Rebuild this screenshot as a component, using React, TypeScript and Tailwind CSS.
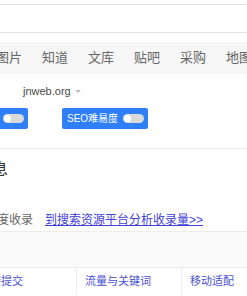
const navItems = ["图片", "知道", "文库", "贴吧", "采购", "地图"];

const Toggle = () => (
  <span className="flex h-[9px] w-[21px] items-center rounded-full bg-[#dadada] px-[1px]">
    <span className="h-[7px] w-[7px] rounded-full bg-white" />
  </span>
);

const SwitchButton = ({ label }: { label: string }) => (
  <div className="flex h-[21px] shrink-0 items-center gap-[5px] rounded-[2px] bg-[#2f7ff8] pl-[5px] pr-[4px] text-[10px] text-white">
    <span className="whitespace-nowrap">{label}</span>
    <Toggle />
  </div>
);

export default function App() {
  return (
    <div className="h-[296px] w-[247px] overflow-hidden bg-white font-['Liberation_Sans','Noto_Sans_CJK_SC',sans-serif]">
      <div className="h-[4px]" />
      <div className="h-[29px] border-y border-[#e3e3e3]" />
      <div className="h-[9px]" />

      <nav className="flex h-[32px] items-center gap-[20px] whitespace-nowrap bg-[#f6f6f6] pl-0 text-[13px] text-[#666]">
        <div className="-ml-[4px] flex gap-[20px]">
          {navItems.map((item) => (
            <span key={item}>{item}</span>
          ))}
        </div>
      </nav>

      <div className="border-b border-[#ececec]">
        <div className="flex h-[34px] items-center pl-[23px] text-[11px] text-[#4a4a4a]">
          <span>jnweb.org</span>
          <span className="ml-[4px] h-0 w-0 border-x-[3px] border-t-[3px] border-x-transparent border-t-[#bbb]" />
        </div>
        <div className="-ml-[57px] flex gap-[34px] pb-[19px]">
          <SwitchButton label="关键词排名" />
          <SwitchButton label="SEO难易度" />
        </div>
      </div>

      <div className="h-[83px] border-b border-[#ececec]">
        <h2 className="-ml-[56px] pt-[11px] text-[16px] leading-[20px] text-[#333] whitespace-nowrap">
          网站信息
        </h2>
        <div className="-ml-[15px] mt-[32px] flex gap-[12px] whitespace-nowrap text-[12px] leading-[16px]">
          <span className="text-[#666]">百度收录</span>
          <a href="#" className="text-[#4242d8] underline">
            到搜索资源平台分析收录量&gt;&gt;
          </a>
        </div>
      </div>

      <div className="h-[36px] border-b border-[#ececec] bg-[#fafafa]" />

      <div className="-ml-[28px] flex h-[27px] whitespace-nowrap text-[11px] text-[#4a4fd0]">
        <div className="flex w-[105px] shrink-0 items-center justify-end border-r border-[#eeeeee] pr-[53px]">
          链接提交
        </div>
        <div className="flex w-[105px] shrink-0 items-center border-r border-[#eeeeee] pl-[8px]">
          流量与关键词
        </div>
        <div className="flex w-[105px] shrink-0 items-center pl-[8px]">移动适配</div>
      </div>
    </div>
  );
}
